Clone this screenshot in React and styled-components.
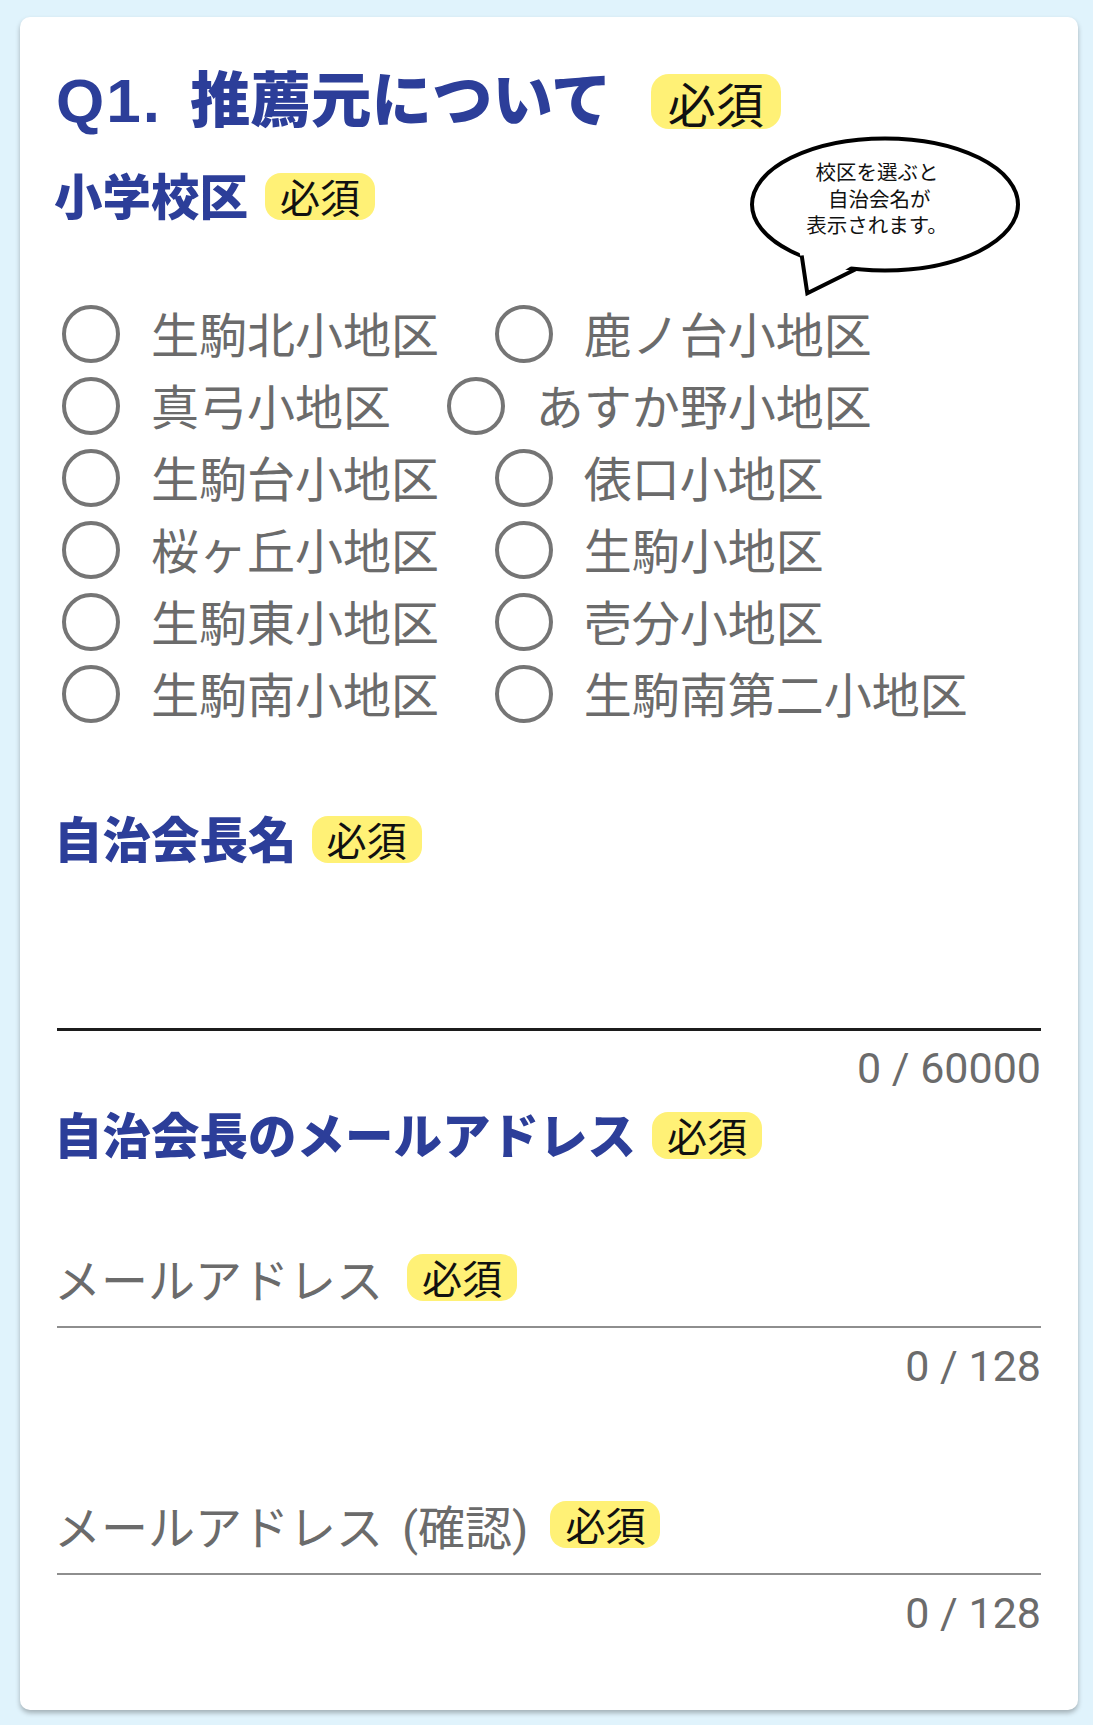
import React from "react";
import styled, { createGlobalStyle } from "styled-components";

const GlobalStyle = createGlobalStyle`
  html, body { margin: 0; padding: 0; background: #e0f3fc; }
  body { font-family: "Noto Sans CJK JP", "Noto Sans", sans-serif; }
  * { box-sizing: border-box; }
`;

const Page = styled.div`
  padding: 16.5px 15px 17px 20px;
  background: #e0f3fc;
`;

const Card = styled.div`
  position: relative;
  background: #ffffff;
  border-radius: 10px;
  box-shadow: 0 3px 5px rgba(0, 0, 0, 0.28);
  padding: 50px 37px 76px;
`;

const Title = styled.h1`
  margin: 0 0 0 -1px;
  height: 70px;
  display: flex;
  align-items: center;
  font-family: "Noto Sans CJK JP", sans-serif;
  font-weight: 900;
  font-size: 60.5px;
  line-height: 70px;
  color: #2c3e99;
  white-space: nowrap;
`;

const TitleText = styled.span`
  padding-bottom: 6px;
`;

const TitleQ = styled.span`
  font-family: "Liberation Sans", Arial, sans-serif;
  font-weight: 700;
  font-size: 62px;
  letter-spacing: 2px;
  margin-right: 28px;
`;

const Heading = styled.h2`
  margin: ${(p) => p.$mt}px 0 0 -3px;
  height: 56px;
  display: flex;
  align-items: center;
  font-family: "Noto Sans CJK JP", sans-serif;
  font-weight: 900;
  font-size: 48.5px;
  line-height: 56px;
  color: #2c3e99;
  white-space: nowrap;
`;

const HeadingText = styled.span`
  padding-bottom: 4px;
`;

const Badge = styled.span`
  display: inline-flex;
  align-items: center;
  justify-content: center;
  background: #fff176;
  color: #111;
  font-family: "Noto Sans CJK JP", sans-serif;
  font-weight: 400;
  font-size: ${(p) => (p.$big ? 48 : 40)}px;
  height: ${(p) => (p.$big ? 55 : 47)}px;
  padding: 0 ${(p) => (p.$big ? 17 : 15)}px;
  border-radius: ${(p) => (p.$big ? 18 : 16)}px;
  margin-left: ${(p) => p.$ml}px;
  line-height: 1;
`;

const Bubble = styled.div`
  position: absolute;
  left: 726px;
  top: 114.5px;
  width: 276px;
  height: 166px;
`;

const BubbleSvg = styled.svg`
  position: absolute;
  left: 0;
  top: 0;
`;

const BubbleText = styled.div`
  position: absolute;
  left: 0;
  top: 27px;
  width: 262px;
  text-align: center;
  font-family: "Noto Sans CJK JP", sans-serif;
  font-size: 20.5px;
  line-height: 26.5px;
  color: #111;
  white-space: pre;
`;

const RadioGroup = styled.div`
  margin-top: 73.5px;
  display: flex;
  flex-wrap: wrap;
`;

const RadioItem = styled.label`
  display: flex;
  align-items: center;
  height: 72px;
  margin-left: 5px;
  margin-right: 50.8px;
`;

const RadioCircle = styled.span`
  display: block;
  width: 58px;
  height: 58px;
  border: 4.5px solid #757575;
  border-radius: 50%;
  margin-right: 31px;
  flex: none;
`;

const RadioLabel = styled.span`
  font-family: "Noto Sans CJK JP", sans-serif;
  font-size: 48px;
  line-height: 72px;
  color: #6b6b6b;
  white-space: nowrap;
  padding-bottom: 3px;
`;

const TextArea = styled.div`
  height: 164px;
  border-bottom: 3px solid #1c1c1c;
`;

const Counter = styled.div`
  margin-top: ${(p) => p.$mt}px;
  height: 42px;
  line-height: 42px;
  text-align: right;
  font-family: Roboto, "Liberation Sans", sans-serif;
  font-size: 43px;
  color: #6b6b6b;
`;

const Field = styled.div`
  margin-top: ${(p) => p.$mt}px;
  padding-bottom: 21px;
  border-bottom: 2px solid #8e8e8e;
`;

const FieldLabel = styled.div`
  margin-left: -3px;
  height: 56px;
  display: flex;
  align-items: center;
  font-family: Roboto, "Noto Sans CJK JP", sans-serif;
  font-size: 47px;
  color: #6b6b6b;
  white-space: nowrap;
`;

const Paren = styled.span`
  margin-left: 19px;
`;

const schools = [
  "生駒北小地区",
  "鹿ノ台小地区",
  "真弓小地区",
  "あすか野小地区",
  "生駒台小地区",
  "俵口小地区",
  "桜ヶ丘小地区",
  "生駒小地区",
  "生駒東小地区",
  "壱分小地区",
  "生駒南小地区",
  "生駒南第二小地区",
];

function SpeechBubble() {
  return (
    <Bubble>
      <BubbleSvg width="276" height="170" viewBox="0 0 276 170">
        <ellipse cx="139" cy="73.5" rx="133" ry="66" fill="#fff" stroke="#000" strokeWidth="4" />
        <polygon points="53,118 61.3,162.3 112,131" fill="#fff" stroke="none" />
        <polyline
          points="55.7,124.5 61.3,162.3 110.7,137.8"
          fill="none"
          stroke="#000"
          strokeWidth="4"
          strokeLinejoin="miter"
        />
      </BubbleSvg>
      <BubbleText>{"校区を選ぶと\n 自治会名が\n表示されます。"}</BubbleText>
    </Bubble>
  );
}

export default function App() {
  return (
    <>
      <GlobalStyle />
      <Page>
        <Card>
          <Title>
            <TitleText>
              <TitleQ>Q1.</TitleQ>推薦元について
            </TitleText>
            <Badge $big $ml={39}>必須</Badge>
          </Title>

          <Heading $mt={31.5}>
            <HeadingText>小学校区</HeadingText>
            <Badge $ml={17}>必須</Badge>
          </Heading>
          <SpeechBubble />

          <RadioGroup>
            {schools.map((s) => (
              <RadioItem key={s}>
                <RadioCircle />
                <RadioLabel>{s}</RadioLabel>
              </RadioItem>
            ))}
          </RadioGroup>

          <Heading $mt={81.5}>
            <HeadingText>自治会長名</HeadingText>
            <Badge $ml={15}>必須</Badge>
          </Heading>
          <TextArea />
          <Counter $mt={16}>0 / 60000</Counter>

          <Heading $mt={18}>
            <HeadingText>自治会長のメールアドレス</HeadingText>
            <Badge $ml={16}>必須</Badge>
          </Heading>

          <Field $mt={86}>
            <FieldLabel>
              メールアドレス<Badge $ml={24}>必須</Badge>
            </FieldLabel>
          </Field>
          <Counter $mt={17}>0 / 128</Counter>

          <Field $mt={109}>
            <FieldLabel>
              メールアドレス<Paren>(確認)</Paren>
              <Badge $ml={22}>必須</Badge>
            </FieldLabel>
          </Field>
          <Counter $mt={17}>0 / 128</Counter>
        </Card>
      </Page>
    </>
  );
}
